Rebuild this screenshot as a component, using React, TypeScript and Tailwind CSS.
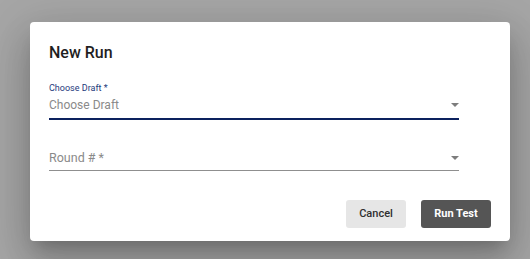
import React from 'react';

const Arrow = () => (
  <svg width="8" height="4" viewBox="0 0 8 4" className="shrink-0">
    <path d="M0 0h8L4 4z" fill="#7d7d7d" />
  </svg>
);

const App = () => {
  return (
    <div className="w-[530px] h-[259px] overflow-hidden bg-[#a6a6a6] pl-[30px] pt-[22px] font-['Roboto',sans-serif]">
      <div className="w-[480px] h-[219px] rounded-[4px] bg-white px-[19px] flex flex-col shadow-[0px_11px_15px_-7px_rgba(0,0,0,0.2),0px_24px_38px_3px_rgba(0,0,0,0.14),0px_9px_46px_8px_rgba(0,0,0,0.12)]">
        <h2 className="pt-[19px] text-[16px] leading-[24px] font-medium text-[#1f1f1f]">New Run</h2>

        <div className="mt-[17px] w-[410px] border-b-2 border-[#0c215e] pb-[5px]">
          <p className="text-[9px] leading-[12px] text-[#243a7c]">Choose Draft *</p>
          <div className="mt-[3px] flex items-center justify-between">
            <span className="text-[12px] leading-[16px] text-[#8a8a8a]">Choose Draft</span>
            <Arrow />
          </div>
        </div>

        <div className="mt-[30px] w-[410px] border-b border-[#8f8f8f] pb-[4px] flex items-center justify-between">
          <span className="text-[12.5px] leading-[16px] text-[#8a8a8a]">Round # *</span>
          <Arrow />
        </div>

        <div className="mt-[29px] flex justify-end gap-[15px]">
          <button className="w-[60px] h-[28px] rounded-[3px] bg-[#e6e6e6] text-[11px] font-medium text-[#2f2f2f]">
            Cancel
          </button>
          <button className="w-[70px] h-[28px] rounded-[3px] bg-[#555555] text-[11px] font-bold text-white">
            Run Test
          </button>
        </div>
      </div>
    </div>
  );
};

export default App;
